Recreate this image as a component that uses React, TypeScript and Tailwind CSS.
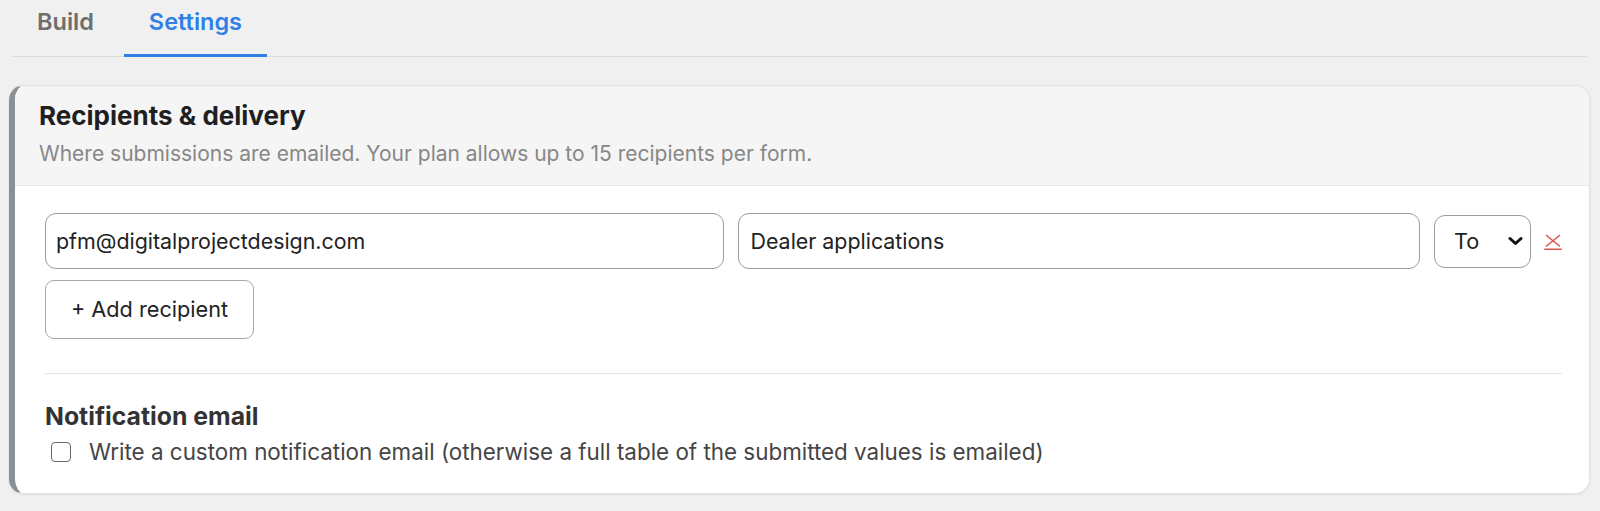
import React from "react";

export default function App() {
  return (
    <div
      className="min-h-[511px] w-[1600px] bg-[#f0f0f0] text-[#222]"
      style={{ fontFamily: "Inter, 'Noto Sans', sans-serif" }}
    >
      <div className="ml-[12px] w-[1575px] flex border-b border-[#dcdcdc] h-[57px]">
        <div className="px-[25px] pt-[7px] text-[23.5px] leading-[30px] font-semibold text-[#6e6e6e] h-[56px]">
          Build
        </div>
        <div className="ml-[5px] px-[25px] pt-[7px] text-[23.5px] leading-[30px] font-semibold text-[#2f7fe6] h-[57px] -mb-px border-b-[3px] border-[#2f7fe6]">
          Settings
        </div>
      </div>

      <div className="ml-[9px] mt-[28px] w-[1581px] rounded-[15px] border border-[#e2e2e2] border-l-[6px] border-l-[#8b9095] bg-white shadow-[0_1px_3px_rgba(0,0,0,0.07)] overflow-hidden">
        <div className="h-[100px] bg-[#f5f5f5] border-b border-[#e8e8e8] pl-[24px] pt-[14px]">
          <div className="text-[26px] font-bold leading-[32px] text-[#1f1f1f]">
            Recipients &amp; delivery
          </div>
          <div className="mt-[8px] text-[21px] leading-[28px] text-[#878787]">
            Where submissions are emailed. Your plan allows up to 15 recipients per form.
          </div>
        </div>

        <div className="pl-[30px] pr-[27px] pt-[27px] pb-[27px]">
          <div className="flex items-center">
            <div className="flex-1 h-[56px] rounded-[11px] border border-[#9d9d9d] flex items-center px-[10px] text-[21.4px] text-[#222]">
              pfm@digitalprojectdesign.com
            </div>
            <div className="ml-[14px] flex-1 h-[56px] rounded-[11px] border border-[#9d9d9d] flex items-center px-[12px] text-[21.4px] text-[#222]">
              Dealer applications
            </div>
            <div className="ml-[14px] w-[97px] h-[53px] rounded-[11px] border border-[#9d9d9d] flex items-center justify-between pl-[19px] pr-[7px] text-[21.7px] text-[#222]">
              <span>To</span>
              <svg width="15" height="10" viewBox="0 0 15 10" fill="none" stroke="#111" strokeWidth="3" strokeLinecap="round" strokeLinejoin="round">
                <path d="M2 2.5l5.5 5 5.5-5" />
              </svg>
            </div>
            <div className="ml-[13px] w-[18px] flex items-center">
              <svg width="18" height="18" viewBox="0 0 18 18" fill="none" stroke="#d9564f" strokeWidth="1.6" strokeLinecap="round">
                <path d="M2.5 3.5l13 10.5" />
                <path d="M15.5 3.5L2.5 14" />
                <path d="M0.8 17.2h16.4" />
              </svg>
            </div>
          </div>

          <div className="mt-[11px] w-[209px] h-[59px] rounded-[9px] border border-[#a8a8a8] bg-white flex items-center justify-center text-[21.7px] text-[#222]">
            + Add recipient
          </div>

          <div className="mt-[34px] border-t border-[#e5e5e5]"></div>

          <div className="mt-[27px] text-[24.8px] font-bold leading-[30px] text-[#333]">
            Notification email
          </div>
          <div className="mt-[7px] flex items-center h-[28px]">
            <span className="ml-[6px] w-[20px] h-[20px] rounded-[4px] border-[1.5px] border-[#6a6a6a] bg-white"></span>
            <span className="ml-[18px] text-[22.4px] leading-[28px] text-[#454545]">
              Write a custom notification email (otherwise a full table of the submitted values is emailed)
            </span>
          </div>
        </div>
      </div>
    </div>
  );
}
